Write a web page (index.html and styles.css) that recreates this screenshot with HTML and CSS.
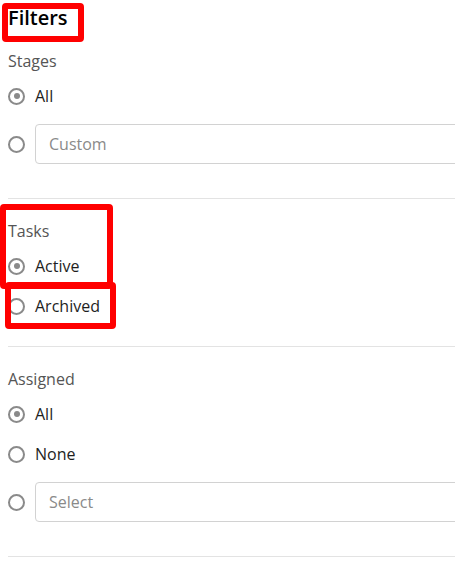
FILE: index.html
```html
<!DOCTYPE html>
<html>
<head>
<meta charset="utf-8">
<link rel="stylesheet" href="styles.css">
</head>
<body>
<div class="page">
  <h2 class="title">Filters</h2>

  <section class="group">
    <div class="group-label">Stages</div>
    <label class="opt"><input type="radio" class="radio" name="stages" checked><span>All</span></label>
    <div class="opt opt-field"><input type="radio" class="radio" name="stages"><input type="text" class="field" placeholder="Custom"></div>
  </section>

  <section class="group group-plain">
    <div class="group-label">Tasks</div>
    <label class="opt"><input type="radio" class="radio" name="tasks" checked><span>Active</span></label>
    <label class="opt"><input type="radio" class="radio" name="tasks"><span>Archived</span></label>
  </section>

  <section class="group">
    <div class="group-label">Assigned</div>
    <label class="opt"><input type="radio" class="radio" name="assigned" checked><span>All</span></label>
    <label class="opt"><input type="radio" class="radio" name="assigned"><span>None</span></label>
    <div class="opt opt-field"><input type="radio" class="radio" name="assigned"><input type="text" class="field" placeholder="Select"></div>
  </section>

  <div class="mark mark-title"></div>
  <div class="mark mark-tasks"></div>
  <div class="mark mark-archived"></div>
</div>
</body>
</html>
```

FILE: styles.css
```css
html, body {
  margin: 0;
  padding: 0;
  background: #fff;
  overflow: hidden;
}

body {
  font-family: "Open Sans", "Noto Sans", sans-serif;
  font-size: 16px;
  color: #222;
}

.page {
  position: relative;
  padding-left: 8px;
  overflow: hidden;
  height: 583px;
}

.title {
  margin: 4px 0 18px;
  font-size: 20px;
  line-height: 28px;
  font-weight: 600;
  color: #000;
}

.group {
  display: flex;
  flex-direction: column;
  padding: 0 0 20px;
  border-bottom: 1px solid #e3e3e3;
}

.group + .group {
  padding-top: 21px;
}

.group-label {
  line-height: 22px;
  color: #555;
  margin-bottom: 4px;
}

.opt {
  display: flex;
  align-items: center;
  gap: 10px;
  height: 40px;
  line-height: 22px;
  color: #1e1e1e;
}

.opt-field {
  margin: 8px 0 14px;
}

.radio {
  appearance: none;
  -webkit-appearance: none;
  margin: 0;
  flex: none;
  width: 17px;
  height: 17px;
  border: 2.5px solid #8a8a8a;
  border-radius: 50%;
  box-sizing: border-box;
  display: grid;
  place-items: center;
}

.radio:checked::after {
  content: "";
  width: 6px;
  height: 6px;
  border-radius: 50%;
  background: #8a8a8a;
}

.field {
  flex: none;
  width: 520px;
  height: 40px;
  box-sizing: border-box;
  border: 1px solid #d2d2d2;
  border-radius: 4px;
  padding: 0 13px;
  font-family: inherit;
  font-size: 16px;
  color: #222;
  background: #fff;
  outline: none;
}

.field::placeholder {
  color: #8a8a8a;
}

.mark {
  position: absolute;
  border: 6px solid #ff0000;
  border-radius: 4px;
  box-sizing: border-box;
  pointer-events: none;
}

.mark-title {
  left: 2px;
  top: 3px;
  width: 82px;
  height: 39px;
}

.mark-tasks {
  left: 0;
  top: 204px;
  width: 113px;
  height: 85px;
}

.mark-archived {
  left: 5px;
  top: 282px;
  width: 111px;
  height: 47px;
}
```
